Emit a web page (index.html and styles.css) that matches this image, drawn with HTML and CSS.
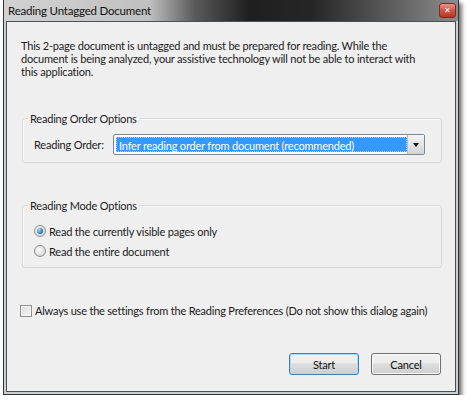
FILE: index.html
```html
<!DOCTYPE html>
<html lang="en">
<head>
    <meta charset="UTF-8">
    <title>Reading Untagged Document</title>
    <link rel="stylesheet" href="styles.css">
</head>
<body>
    <div class="window">
        <div class="titlebar">
            <span class="title">Reading Untagged Document</span>
            <span class="close-btn">&#x2715;</span>
        </div>

        <div class="client">
            <p class="intro">This 2-page document is untagged and must be prepared for reading. While the document is being analyzed, your assistive technology will not be able to interact with this application.</p>

            <fieldset class="group group-order">
                <legend>Reading Order Options</legend>
                <div class="order-row">
                    <span class="order-label">Reading Order:</span>
                    <div class="select">
                        <span class="select-value">Infer reading order from document (recommended)</span>
                        <span class="select-arrow"></span>
                    </div>
                </div>
            </fieldset>

            <fieldset class="group group-mode">
                <legend>Reading Mode Options</legend>
                <label class="radio-row"><span class="radio checked"></span>Read the currently visible pages only</label>
                <label class="radio-row"><span class="radio"></span>Read the entire document</label>
            </fieldset>

            <label class="check-row"><span class="checkbox"></span>Always use the settings from the Reading Preferences (Do not show this dialog again)</label>

            <div class="buttons">
                <button class="btn btn-default">Start</button>
                <button class="btn">Cancel</button>
            </div>
        </div>
    </div>
</body>
</html>
```

FILE: styles.css
```css
* { box-sizing: border-box; }

body {
    margin: 0;
    background: #fff;
    font-family: Lato, 'Liberation Sans', sans-serif;
    font-size: 11px;
    letter-spacing: -0.2px;
    color: #1b1b1b;
}

.window {
    width: 456px;
    margin-left: 3px;
    padding: 0 2px 2px;
    background: #c9ced3;
    border: 1px solid #30353b;
    border-top: none;
    box-shadow: 3px 3px 4px rgba(0,0,0,0.55);
}

.titlebar {
    height: 21px;
    margin: 0 -2px;
    padding: 0 2px 0 4px;
    display: flex;
    align-items: center;
    background: linear-gradient(to right, #d2d2d2 0%, #c0c0c0 32%, #5a5a5a 42%, #1f1f1f 54%, #262626 68%, #5c5c5c 85%, #8c8c8c 100%);
}

.title {
    font-size: 11.5px;
    color: #111;
}

.close-btn {
    margin-left: auto;
    width: 17px;
    height: 15px;
    border: 1px solid #7a2a20;
    border-radius: 3px;
    background: linear-gradient(#ea9285, #cf5444 50%, #bb3522);
    color: #fff;
    font-size: 8px;
    line-height: 13px;
    text-align: center;
}

.client {
    height: 371px;
    background: #efefef;
    border: 1px solid #4b5056;
    padding: 17px 13px 0 14px;
    display: flex;
    flex-direction: column;
}

.intro {
    margin: 0;
    max-width: 395px;
    line-height: 13px;
}

.group {
    margin: 0;
    border: 1px solid #d6d6d6;
    border-radius: 3px;
    box-shadow: inset 1px 1px 0 #fafafa;
    padding: 0 5px 7px;
}

.group legend {
    padding: 0 2px;
    line-height: 13px;
}

.group-order {
    margin: 34px 0 0 1px;
}

.order-row {
    display: flex;
    align-items: center;
    padding: 9px 0 0 6px;
}

.order-label {
    width: 79px;
    white-space: nowrap;
}

.select {
    width: 312px;
    height: 21px;
    display: flex;
    padding: 2px;
    border: 1px solid #7c8895;
    border-radius: 2px;
    background: #fff;
}

.select-value {
    flex: 1;
    background: #3399ff;
    color: #fff;
    line-height: 15px;
    padding-left: 2px;
    border: 1px dotted #a8d1ff;
}

.select-arrow {
    width: 17px;
    margin: -2px -2px -2px 0;
    background: linear-gradient(#f4f4f4, #e4e4e4 50%, #d4d4d4);
    border-left: 1px solid #b8bec5;
    position: relative;
}

.select-arrow::after {
    content: '';
    position: absolute;
    left: 5px;
    top: 8px;
    border: 3px solid transparent;
    border-top: 4px solid #111;
    border-bottom: none;
}

.group-mode {
    margin: 36px 0 0 1px;
    padding-top: 9px;
    padding-bottom: 6px;
}

.radio-row {
    display: flex;
    align-items: center;
    height: 20px;
    padding-left: 6px;
    gap: 3px;
}

.radio {
    width: 12px;
    height: 12px;
    border-radius: 50%;
    border: 1px solid #8e8f8f;
    background: radial-gradient(circle at 40% 40%, #ffffff, #d8d8d8 70%, #c4c4c4);
    position: relative;
}

.radio.checked::after {
    content: '';
    position: absolute;
    left: 2px;
    top: 2px;
    width: 6px;
    height: 6px;
    border-radius: 50%;
    background: radial-gradient(circle at 35% 35%, #a9e0f5, #2a7db5 60%, #0f4f80);
}

.check-row {
    display: flex;
    align-items: center;
    gap: 3px;
    margin: 36px 0 0 -1px;
}

.checkbox {
    width: 12px;
    height: 12px;
    border: 1px solid #8f8f8f;
    background: linear-gradient(135deg, #dcdcdc, #f8f8f8);
    box-shadow: inset 0 0 0 1px #f4f4f4;
}

.buttons {
    margin-top: auto;
    margin-bottom: 16px;
    display: flex;
    justify-content: flex-end;
    gap: 12px;
    padding-right: 1px;
}

.btn {
    width: 70px;
    height: 22px;
    font-family: inherit;
    font-size: 11px;
    letter-spacing: -0.2px;
    color: #111;
    border: 1px solid #707070;
    border-radius: 3px;
    background: linear-gradient(#f3f3f3, #ebebeb 45%, #dddddd 50%, #cfcfcf);
    box-shadow: inset 0 0 0 1px #fafafa;
}

.btn-default {
    border-color: #3c7fb1;
    box-shadow: inset 0 0 0 1px #a8def7;
}
```
